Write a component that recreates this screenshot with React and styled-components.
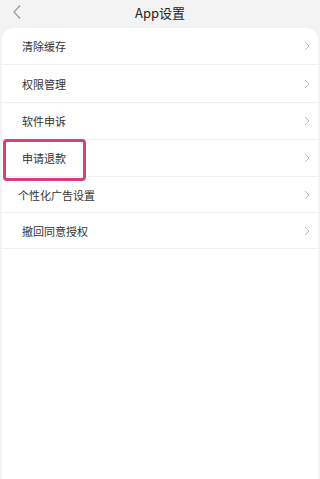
import React from "react";
import styled, { createGlobalStyle } from "styled-components";

const Global = createGlobalStyle`
  html, body { margin: 0; padding: 0; background: #ffffff; }
  body { font-family: "Noto Sans CJK SC", "Noto Sans", sans-serif; }
  * { box-sizing: border-box; }
`;

const Page = styled.div`
  width: 100%;
  min-height: 100vh;
  background: #f3f3f3;
  display: flex;
  flex-direction: column;
  overflow: hidden;
`;

const Header = styled.div`
  position: relative;
  height: 28px;
  flex: 0 0 28px;
  display: flex;
  align-items: center;
  justify-content: center;
`;

const BackButton = styled.div`
  position: absolute;
  left: 12px;
  top: 4px;
  width: 10px;
  height: 16px;
  display: flex;
`;

const Title = styled.div`
  font-size: 13px;
  color: #222;
  line-height: 1;
  margin-top: -3px;
`;

const Card = styled.div`
  flex: 1;
  margin: 0 2px;
  background: #fff;
  border-radius: 12px 12px 0 0;
  display: flex;
  flex-direction: column;
`;

const Row = styled.div`
  position: relative;
  height: ${(p) => p.$h || 37}px;
  flex: 0 0 ${(p) => p.$h || 37}px;
  display: flex;
  align-items: center;
  padding-left: ${(p) => (p.$shift ? 18 : 22)}px;
  padding-right: 10px;
  margin-left: -2px;
  margin-right: -2px;
  border-bottom: 1px solid #f0f0f0;
`;

const Label = styled.span`
  flex: 1;
  font-size: 11px;
  color: #333;
  line-height: 1;
  margin-top: 1px;
`;

const Chevron = styled.svg`
  width: 6px;
  height: 10px;
  flex: 0 0 6px;
`;

const Highlight = styled.div`
  position: absolute;
  left: 3px;
  top: -1px;
  width: 83px;
  height: 42px;
  border: 3px solid #d4407c;
  border-radius: 4px;
  pointer-events: none;
`;

const items = [
  { label: "清除缓存", h: 37 },
  { label: "权限管理", h: 38 },
  { label: "软件申诉", h: 37 },
  { label: "申请退款", h: 37, mark: true },
  { label: "个性化广告设置", h: 36, shift: true },
  { label: "撤回同意授权", h: 36 },
];

export default function App() {
  return (
    <>
      <Global />
      <Page>
        <Header>
          <BackButton>
            <svg width="10" height="16" viewBox="0 0 10 16">
              <path d="M8 1.5 L2 8 L8 14.5" fill="none" stroke="#999" strokeWidth="1.2" />
            </svg>
          </BackButton>
          <Title>App设置</Title>
        </Header>
        <Card>
          {items.map((it) => (
            <Row key={it.label} $h={it.h} $shift={it.shift}>
              <Label>{it.label}</Label>
              <Chevron viewBox="0 0 6 10">
                <path d="M1 1 L5 5 L1 9" fill="none" stroke="#bbb" strokeWidth="1" />
              </Chevron>
              {it.mark && <Highlight />}
            </Row>
          ))}
        </Card>
      </Page>
    </>
  );
}
